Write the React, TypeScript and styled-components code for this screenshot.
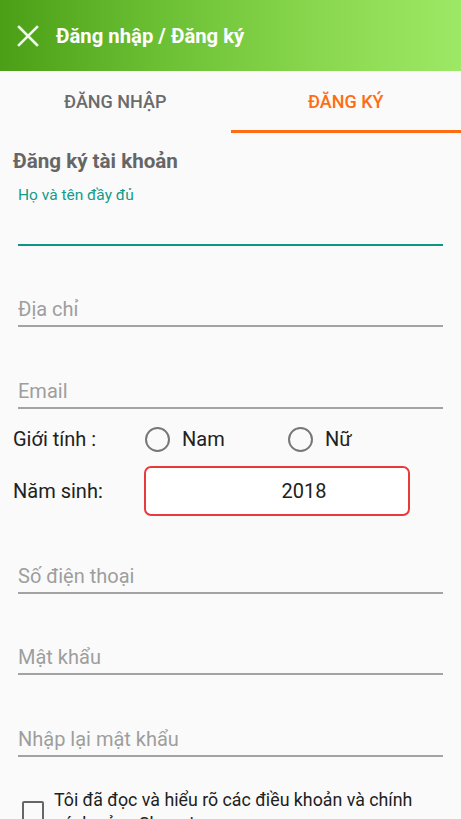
import React from "react";
import styled, { createGlobalStyle } from "styled-components";

const Global = createGlobalStyle`
  html, body { margin: 0; padding: 0; background: #fafafa; }
  body { font-family: Roboto, "Noto Sans", "Liberation Sans", sans-serif; overflow: hidden; }
  * { box-sizing: border-box; }
`;

const Screen = styled.div`
  width: 461px;
  height: 819px;
  background: #fafafa;
  overflow: hidden;
`;

const Header = styled.header`
  height: 71px;
  display: flex;
  align-items: center;
  padding-left: 17px;
  gap: 17px;
  background: linear-gradient(90deg, #4b9f16 0%, #6cc034 35%, #8ad84f 70%, #9de865 100%);
`;

const Title = styled.h1`
  margin: 0;
  font-size: 20.3px;
  font-weight: 700;
  color: #ffffff;
`;

const Tabs = styled.nav`
  height: 62px;
  display: flex;
`;

const Tab = styled.div<{ $active?: boolean }>`
  flex: 1;
  display: flex;
  align-items: center;
  justify-content: center;
  padding-top: 2px;
  font-size: 18px;
  font-weight: 500;
  color: ${(p) => (p.$active ? "#ff6d12" : "#6b6b6b")};
  border-bottom: 3px solid ${(p) => (p.$active ? "#ff6d12" : "transparent")};
`;

const Form = styled.div`
  padding: 0 18px;
  display: flex;
  flex-direction: column;
`;

const Heading = styled.h2`
  margin: 15px 0 0 -5px;
  font-size: 20.6px;
  line-height: 26px;
  font-weight: 700;
  color: #666666;
`;

const FloatLabel = styled.div`
  margin-top: 11px;
  font-size: 15.5px;
  line-height: 20px;
  color: #139b8b;
`;

const Field = styled.div<{ $height: number; $focused?: boolean }>`
  height: ${(p) => p.$height}px;
  display: flex;
  align-items: flex-end;
  padding-bottom: 3px;
  border-bottom: 2px solid ${(p) => (p.$focused ? "#0e9585" : "#a3a3a3")};
  font-size: 20px;
  line-height: 26px;
  color: #9e9e9e;
`;

const Row = styled.div<{ $mt: number; $height: number }>`
  margin: ${(p) => p.$mt}px 0 0 -5px;
  height: ${(p) => p.$height}px;
  display: flex;
  align-items: center;
`;

const RowLabel = styled.div`
  width: 132px;
  font-size: 20px;
  color: #212121;
`;

const RadioOption = styled.label`
  width: 143px;
  display: flex;
  align-items: center;
  gap: 12px;
  font-size: 20px;
  color: #212121;
`;

const RadioCircle = styled.span`
  width: 25px;
  height: 25px;
  border-radius: 50%;
  border: 2px solid #777777;
`;

const YearBox = styled.div`
  width: 266px;
  height: 50px;
  margin-left: -1px;
  border: 2px solid #e8393d;
  border-radius: 7px;
  background: #ffffff;
  display: flex;
  align-items: center;
  justify-content: center;
  padding-left: 54px;
  font-size: 20px;
  color: #212121;
`;

const AgreeRow = styled.div`
  margin-top: 31px;
  margin-left: 4px;
  display: flex;
  align-items: center;
  gap: 10px;
`;

const CheckBox = styled.span`
  flex: none;
  width: 22px;
  height: 22px;
  border: 2px solid #666666;
  border-radius: 2px;
`;

const AgreeText = styled.div`
  font-size: 17.8px;
  line-height: 24px;
  color: #212121;
`;

const CloseIcon = () => (
  <svg width="22" height="22" viewBox="0 0 22 22" fill="none">
    <path d="M2 2 L20 20 M20 2 L2 20" stroke="#eef8e6" strokeWidth="2.6" strokeLinecap="square" />
  </svg>
);

export default function App() {
  return (
    <Screen>
      <Global />
      <Header>
        <CloseIcon />
        <Title>Đăng nhập / Đăng ký</Title>
      </Header>
      <Tabs>
        <Tab>ĐĂNG NHẬP</Tab>
        <Tab $active>ĐĂNG KÝ</Tab>
      </Tabs>
      <Form>
        <Heading>Đăng ký tài khoản</Heading>
        <FloatLabel>Họ và tên đầy đủ</FloatLabel>
        <Field $height={41} $focused />
        <Field $height={81}>Địa chỉ</Field>
        <Field $height={82}>Email</Field>
        <Row $mt={15} $height={30}>
          <RowLabel>Giới tính :</RowLabel>
          <RadioOption>
            <RadioCircle />
            Nam
          </RadioOption>
          <RadioOption>
            <RadioCircle />
            Nữ
          </RadioOption>
        </Row>
        <Row $mt={12} $height={50}>
          <RowLabel>Năm sinh:</RowLabel>
          <YearBox>2018</YearBox>
        </Row>
        <Field $height={78}>Số điện thoại</Field>
        <Field $height={81}>Mật khẩu</Field>
        <Field $height={82}>Nhập lại mật khẩu</Field>
        <AgreeRow>
          <CheckBox />
          <AgreeText>Tôi đã đọc và hiểu rõ các điều khoản và chính sách của eShopping</AgreeText>
        </AgreeRow>
      </Form>
    </Screen>
  );
}
